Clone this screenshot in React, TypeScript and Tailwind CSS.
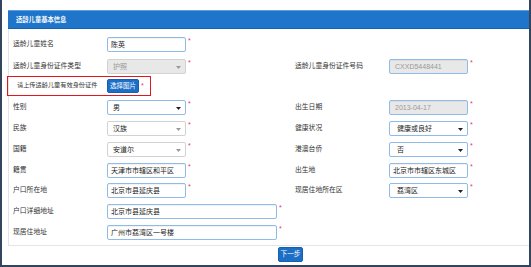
import React from "react";

function Arrow({ dark }: { dark?: boolean }) {
  return (
    <svg
      className="absolute right-[4px] top-[6px]"
      width="5"
      height="3"
      viewBox="0 0 5 3"
    >
      <path d="M0 0H5L2.5 3Z" fill={dark ? "#222" : "#999"} />
    </svg>
  );
}

function Star() {
  return (
    <span className="ml-[2px] text-[7px] leading-[8px] text-[#e8336b]">*</span>
  );
}

function Label({ children }: { children: React.ReactNode }) {
  return (
    <div className="w-[94px] shrink-0 whitespace-nowrap pt-[2px] text-[6.8px] leading-[9px] text-[#333]">
      {children}
    </div>
  );
}

function Input({
  value,
  wide,
  disabled,
}: {
  value: string;
  wide?: boolean;
  disabled?: boolean;
}) {
  return (
    <div className="flex items-start">
      <div
        className={
          "h-[15px] whitespace-nowrap rounded-[2px] border border-[#8fbbe9] pl-[3px] text-[7px] leading-[13px] shadow-[inset_0_1px_1px_rgba(0,0,0,0.06)] " +
          (wide ? "w-[170px] " : "w-[79px] ") +
          (disabled ? "bg-[#e8e8e8] pl-[5px] text-[#999]" : "bg-white text-[#222]")
        }
      >
        {value}
      </div>
      <Star />
    </div>
  );
}

function Select({
  value,
  gray,
  dark,
  disabled,
  pad,
}: {
  value: string;
  gray?: boolean;
  dark?: boolean;
  disabled?: boolean;
  pad?: boolean;
}) {
  return (
    <div className="flex items-start">
      <div
        className={
          "relative h-[15px] w-[79px] whitespace-nowrap rounded-[2px] border text-[7px] leading-[13px] " +
          (gray ? "border-[#d2d2d2] " : "border-[#8fbbe9] ") +
          (pad ? "pl-[7px] " : "pl-[5px] ") +
          (disabled ? "bg-[#e8e8e8] text-[#999]" : "bg-white text-[#222]")
        }
      >
        {value}
        <Arrow dark={dark} />
      </div>
      <Star />
    </div>
  );
}

export default function App() {
  return (
    <div className="relative h-[267px] w-[531px] overflow-hidden border-b-2 border-l-2 border-r-2 border-[#34445c] bg-white font-['Liberation_Sans','Noto_Sans_CJK_SC',sans-serif]">
      <div className="ml-[6px] mt-[10px]">
        <div className="flex h-[19px] items-center border-b border-t border-b-[#1762ae] border-t-[#5a9de0] bg-[#1e75ca] pl-[8px] text-[6.3px] font-bold text-white">
          适龄儿童基本信息
        </div>
        <div className="h-[217px] border-b border-l border-[#e4e4e4] pl-[4px] pt-[8px]">
          <div className="flex h-[22px]">
            <div className="flex w-[282px]">
              <Label>适龄儿童姓名</Label>
              <Input value="陈英" />
            </div>
          </div>
          <div className="flex h-[17px]">
            <div className="flex w-[282px]">
              <Label>适龄儿童身份证件类型</Label>
              <Select value="护照" gray disabled />
            </div>
            <div className="flex">
              <Label>适龄儿童身份证件号码</Label>
              <Input value="CXXD5448441" disabled />
            </div>
          </div>
          <div className="mb-[4px] ml-[-6px] flex h-[20px] w-[144px] items-center border border-[#e3151e]">
            <div className="w-[99px] shrink-0 whitespace-nowrap pb-[3px] pl-[9px] text-[6.2px] leading-[9px] text-[#333]">
              请上传适龄儿童有效身份证件
            </div>
            <div className="flex h-[14px] w-[32px] shrink-0 items-center justify-center whitespace-nowrap rounded-[2px] border border-[#1560b2] bg-[#1d6fc6] text-[6.5px] text-white">
              选择图片
            </div>
            <Star />
          </div>
          <div className="flex h-[21px]">
            <div className="flex w-[282px]">
              <Label>性别</Label>
              <Select value="男" dark />
            </div>
            <div className="flex">
              <Label>出生日期</Label>
              <Input value="2013-04-17" disabled />
            </div>
          </div>
          <div className="flex h-[21px]">
            <div className="flex w-[282px]">
              <Label>民族</Label>
              <Select value="汉族" gray />
            </div>
            <div className="flex">
              <Label>健康状况</Label>
              <Select value="健康或良好" dark pad />
            </div>
          </div>
          <div className="flex h-[21px]">
            <div className="flex w-[282px]">
              <Label>国籍</Label>
              <Select value="安道尔" gray />
            </div>
            <div className="flex">
              <Label>港澳台侨</Label>
              <Select value="否" dark pad />
            </div>
          </div>
          <div className="flex h-[20px]">
            <div className="flex w-[282px]">
              <Label>籍贯</Label>
              <Input value="天津市市辖区和平区" />
            </div>
            <div className="flex">
              <Label>出生地</Label>
              <Input value="北京市市辖区东城区" />
            </div>
          </div>
          <div className="flex h-[21px]">
            <div className="flex w-[282px]">
              <Label>户口所在地</Label>
              <Input value="北京市县延庆县" />
            </div>
            <div className="flex">
              <Label>现居住地所在区</Label>
              <Select value="荔湾区" dark pad />
            </div>
          </div>
          <div className="flex h-[21px]">
            <Label>户口详细地址</Label>
            <Input value="北京市县延庆县" wide />
          </div>
          <div className="flex h-[21px]">
            <Label>现居住地址</Label>
            <Input value="广州市荔湾区一号楼" wide />
          </div>
        </div>
        <div className="pl-[270px] pt-[1px]">
          <div className="flex h-[15px] w-[25px] items-center justify-center whitespace-nowrap rounded-[2px] border border-[#1560b2] bg-[#1d6fc6] text-[6.7px] text-white">
            下一步
          </div>
        </div>
      </div>
    </div>
  );
}
